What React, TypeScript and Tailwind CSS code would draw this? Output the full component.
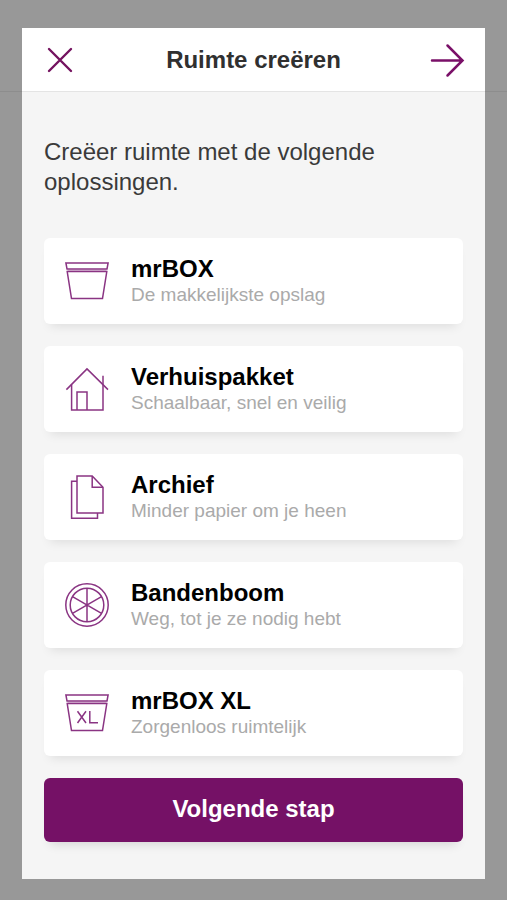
import React from "react";

type Option = { id: string; title: string; subtitle: string; icon: React.ReactNode };

function Icon({ children }: { children: React.ReactNode }) {
  return (
    <svg
      aria-hidden="true"
      viewBox="0 0 44 44"
      className="size-11 shrink-0"
      fill="none"
      stroke="#8a3483"
      strokeWidth="1.5"
    >
      {children}
    </svg>
  );
}

const box = (
  <>
    <path d="M2.5 11.3H41.5" stroke="#dcc0da" />
    <path d="M0.9 4H43.1L42 10H2Z" />
    <path d="M2.2 12.6H41.8L37.5 39.6H6.5Z" />
  </>
);

const options: Option[] = [
  { id: "mrbox", title: "mrBOX", subtitle: "De makkelijkste opslag", icon: <Icon>{box}</Icon> },
  {
    id: "verhuis",
    title: "Verhuispakket",
    subtitle: "Schaalbaar, snel en veilig",
    icon: (
      <Icon>
        <path d="M1.4 22.6 22 1.9 43 22.6" />
        <path d="M6.6 17.5V43H38V8.8" />
        <path d="M12 43V25H22V43" />
      </Icon>
    ),
  },
  {
    id: "archief",
    title: "Archief",
    subtitle: "Minder papier om je heen",
    icon: (
      <Icon>
        <path d="M12 0.9H27.2L38 12.2V38H12Z" />
        <path d="M27.2 0.9V12.2H38" />
        <path d="M12 6.2H6.6V43.2H32.5V38" />
      </Icon>
    ),
  },
  {
    id: "bandenboom",
    title: "Bandenboom",
    subtitle: "Weg, tot je ze nodig hebt",
    icon: (
      <Icon>
        <circle cx="22" cy="22" r="21.2" />
        <circle cx="22" cy="22" r="16.8" />
        <path d="M22 5.2V38.8M7.5 13.6 36.5 30.4M36.5 13.6 7.5 30.4" />
      </Icon>
    ),
  },
  {
    id: "mrbox-xl",
    title: "mrBOX XL",
    subtitle: "Zorgenloos ruimtelijk",
    icon: (
      <Icon>
        {box}
        <path d="M12.5 20.3 21 32M21 20.3 12.5 32M24.8 20V31.8H33" />
      </Icon>
    ),
  },
];

export default function App() {
  return (
    <div className="relative min-h-screen bg-[#989898] px-[22px] pt-7 pb-[21px] font-['Liberation_Sans',Arial,sans-serif]">
      <div aria-hidden="true" className="absolute inset-x-0 top-0 h-[92px] border-b border-[#8d8d8d]" />
      <main
        role="dialog"
        aria-labelledby="dialog-title"
        className="relative min-h-[calc(100vh-49px)] bg-[#f5f5f5]"
      >
        <header className="flex h-16 items-center justify-between border-b border-[#e4e4e4] bg-white px-5">
          <button type="button" aria-label="Sluiten" className="flex size-9 items-center justify-center">
            <svg viewBox="0 0 28 28" className="size-7" fill="none" stroke="#74125f" strokeWidth="2.4" strokeLinecap="round">
              <path d="M3 3 25 25M25 3 3 25" />
            </svg>
          </button>
          <h1 id="dialog-title" className="text-2xl font-bold text-[#303030]">
            Ruimte creëren
          </h1>
          <button type="button" aria-label="Volgende" className="flex size-9 items-center justify-center">
            <svg viewBox="0 0 36 36" className="size-9" fill="none" stroke="#7a1068" strokeWidth="2.5" strokeLinecap="round">
              <path d="M3 18.5H33M18.5 3.5 33.5 18.5 18.5 33.5" />
            </svg>
          </button>
        </header>
        <div className="px-[22px] pt-[45px] pb-9">
          <p className="text-2xl leading-[30px] text-[#3a3a3a]">Creëer ruimte met de volgende oplossingen.</p>
          <ul className="mt-[41px] flex flex-col gap-[22px]">
            {options.map((o) => (
              <li key={o.id}>
                <button
                  type="button"
                  className="flex h-[86px] w-full items-center gap-[22px] rounded-md bg-white px-[21px] text-left shadow-[0_8px_10px_-6px_rgba(0,0,0,0.10)]"
                >
                  {o.icon}
                  <span className="flex flex-col">
                    <span className="text-2xl leading-7 font-bold text-black">{o.title}</span>
                    <span className="text-[19px] leading-6 text-[#aaaaaa]">{o.subtitle}</span>
                  </span>
                </button>
              </li>
            ))}
          </ul>
          <button
            type="button"
            className="mt-[22px] flex h-16 w-full items-center justify-center rounded-md bg-[#751166] pb-0.5 text-2xl font-bold text-white shadow-[0_8px_10px_-6px_rgba(0,0,0,0.14)]"
          >
            Volgende stap
          </button>
        </div>
      </main>
    </div>
  );
}
